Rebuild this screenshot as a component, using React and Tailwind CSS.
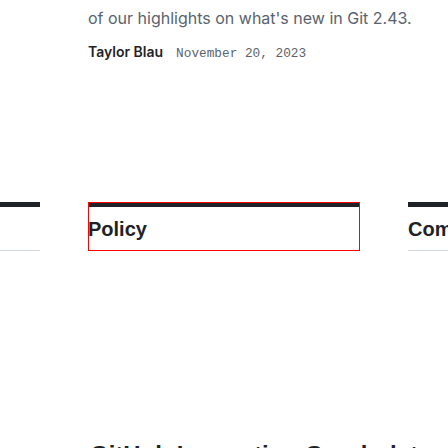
import React from "react";

const cards = ["Engineering", "Policy", "Community"];

export default function App() {
  return (
    <div className="w-[448px] h-[448px] overflow-hidden bg-white">
      <div className="pl-[88px] pt-[6px]">
        <p className="text-[16px] leading-[24px] text-[#59636e] whitespace-nowrap" style={{ fontFamily: "Inter, sans-serif" }}>
          of our highlights on what's new in Git 2.43.
        </p>
        <div className="mt-3 flex items-baseline gap-[13px] whitespace-nowrap">
          <span className="text-[14px] leading-[20px] font-semibold text-[#1f2328]" style={{ fontFamily: "Inter, sans-serif" }}>
            Taylor Blau
          </span>
          <span className="text-[12.75px] leading-[20px] text-[#59636e]" style={{ fontFamily: "'Liberation Mono', monospace" }}>
            November 20, 2023
          </span>
        </div>
      </div>

      <div className="mt-[138px] flex gap-[48px] ml-[-232px]">
        {cards.map((c) => (
          <div
            key={c}
            className={
              c === "Policy"
                ? "w-[272px] shrink-0 border-t-[5px] border-b border-t-[#1f2328] border-b-[#d1d9e0] outline outline-1 -outline-offset-1 outline-[#ff0000]"
                : "w-[272px] shrink-0 border-t-[5px] border-b border-t-[#1f2328] border-b-[#d1d9e0]"
            }
          >
            <div className="pt-[8px] pb-[7px]">
              <h3 className="text-[20px] leading-[28px] font-bold text-[#1f2328] whitespace-nowrap" style={{ fontFamily: "'Liberation Sans', Arial, sans-serif" }}>
                {c}
              </h3>
            </div>
          </div>
        ))}
      </div>

      <div className="mt-[188px] pl-[90px]">
        <h2 className="text-[24px] leading-[32px] font-bold text-[#1f2328] whitespace-nowrap" style={{ fontFamily: "'Liberation Sans', Arial, sans-serif" }}>
          GitHub Innovation Graph data
        </h2>
      </div>
    </div>
  );
}
